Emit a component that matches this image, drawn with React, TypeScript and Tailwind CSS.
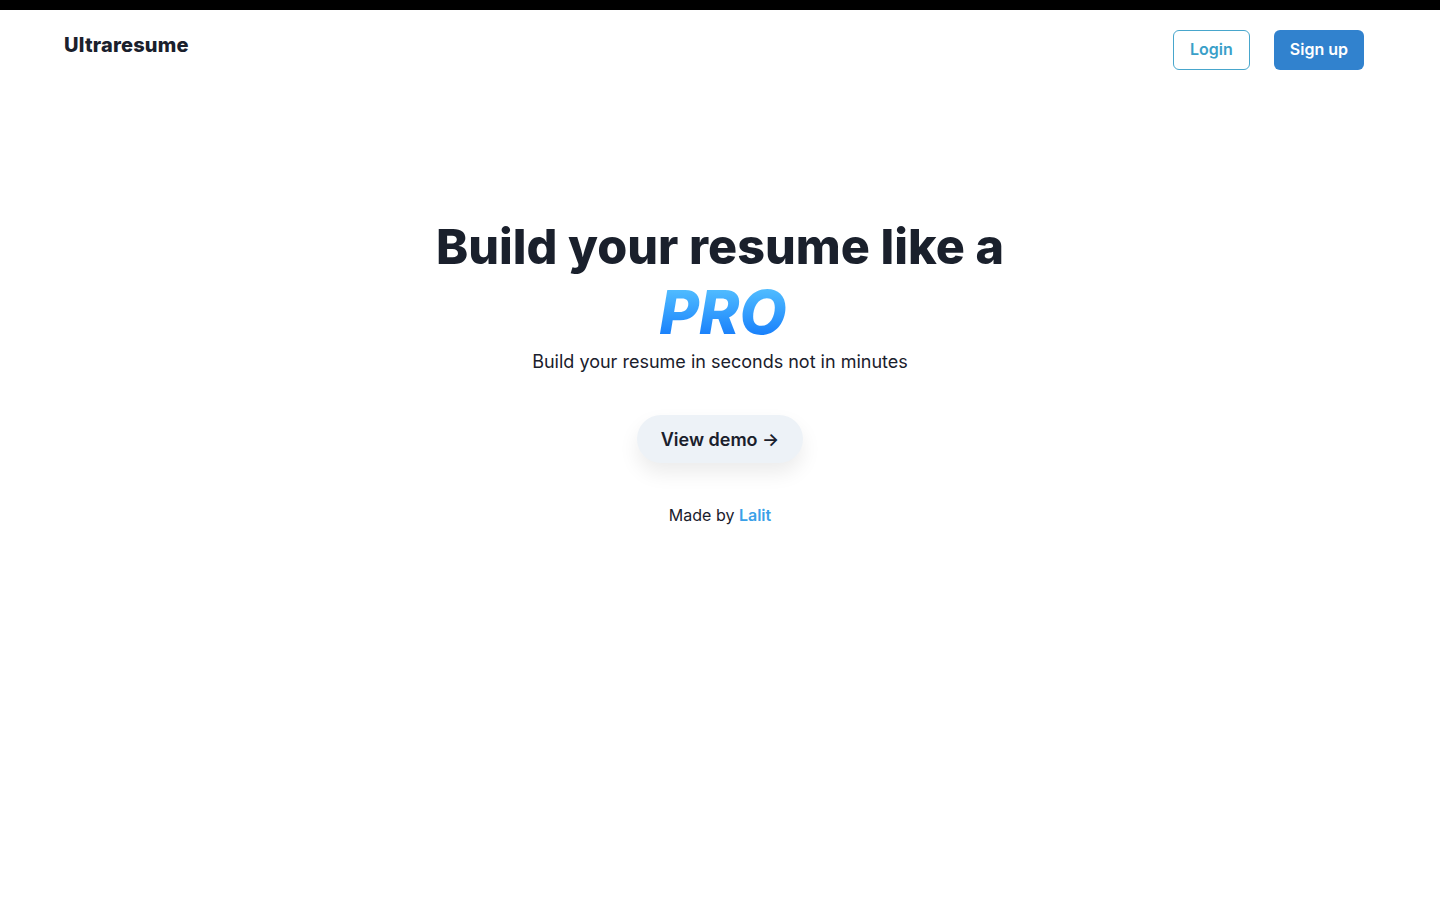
import React from "react";

export default function App() {
  return (
    <div className="min-h-screen bg-white text-[#1a202c]" style={{ fontFamily: "Inter, 'Noto Sans', sans-serif" }}>
      <div className="h-[10px] bg-black" />
      <header className="flex items-start justify-between pl-16 pr-[76px] pt-5">
        <div className="text-[20px] leading-7 font-extrabold tracking-[0.01em] mt-[1px]">Ultraresume</div>
        <div className="flex items-center gap-6">
          <button className="h-10 px-4 pb-[2px] rounded-md border border-[#48a6cc] text-[#3a9fc9] font-semibold text-[16px]">Login</button>
          <button className="h-10 px-4 pb-[2px] rounded-md bg-[#3182ce] text-white font-semibold text-[16px]">Sign up</button>
        </div>
      </header>
      <main className="flex flex-col items-center text-center mt-[147px]">
        <h1 className="text-[48.5px] leading-[60px] font-extrabold">Build your resume like a</h1>
        <div className="text-[61px] leading-[70px] font-extrabold italic bg-gradient-to-b from-[#5fcbff] to-[#0c6ff9] bg-clip-text text-transparent pl-[14px] pr-2">PRO</div>
        <p className="text-[18px] leading-7 mt-[1px]">Build your resume in seconds not in minutes</p>
        <button className="mt-[39px] h-12 px-6 rounded-full bg-[#edf2f7] text-[18px] font-semibold shadow-[0_10px_20px_rgba(0,0,0,0.08)]">View demo →</button>
        <p className="mt-[40px] text-[16px]">Made by <span className="font-semibold text-[#3aa0e8]">Lalit</span></p>
      </main>
    </div>
  );
}
